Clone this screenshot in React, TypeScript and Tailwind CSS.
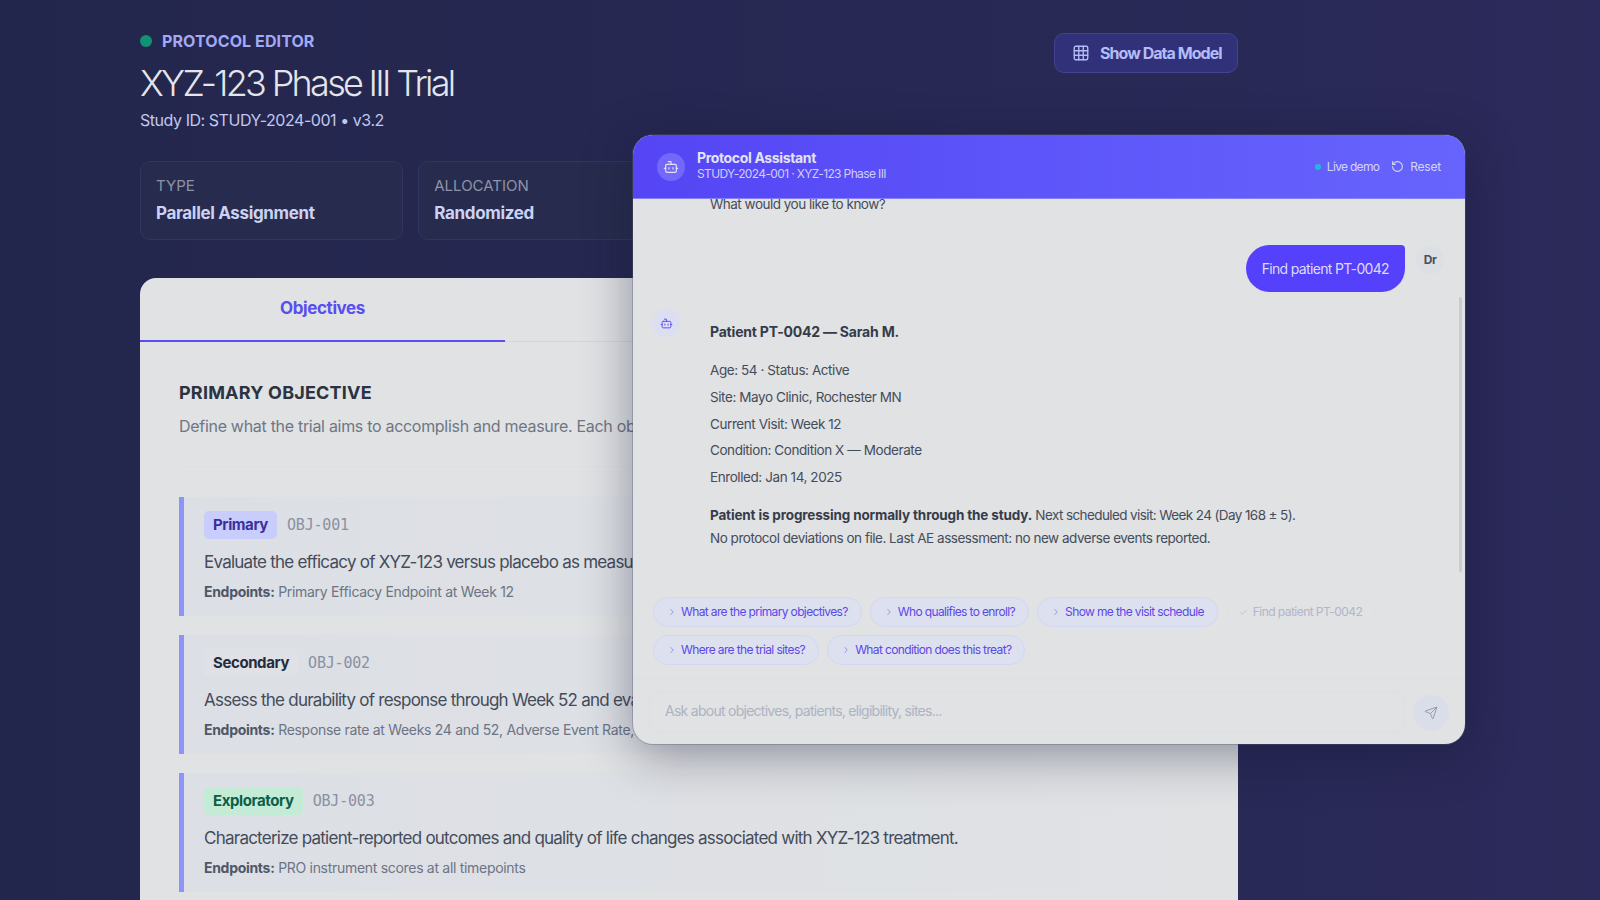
import { Bot, ChevronRight, Check, RotateCcw, Send, Grid3x3 } from "lucide-react";

const metaCards = [
  { label: "TYPE", value: "Parallel Assignment" },
  { label: "ALLOCATION", value: "Randomized" },
  { label: "MASKING", value: "Double-Blind" },
  { label: "ENROLLMENT", value: "1,200" },
];

const objectives = [
  {
    tag: "Primary",
    tagClass: "bg-[#c8cdfb] text-[#3a2fa0]",
    code: "OBJ-001",
    text: "Evaluate the efficacy of XYZ-123 versus placebo as measured by the primary endpoint at Week 12.",
    endpoints: "Primary Efficacy Endpoint at Week 12",
  },
  {
    tag: "Secondary",
    tagClass: "bg-[#dfe1e6] text-[#252c3c]",
    code: "OBJ-002",
    text: "Assess the durability of response through Week 52 and evaluate safety and tolerability.",
    endpoints: "Response rate at Weeks 24 and 52, Adverse Event Rate, Lab Values",
  },
  {
    tag: "Exploratory",
    tagClass: "bg-[#c4ebd6] text-[#0b5f45]",
    code: "OBJ-003",
    text: "Characterize patient-reported outcomes and quality of life changes associated with XYZ-123 treatment.",
    endpoints: "PRO instrument scores at all timepoints",
  },
];

const suggestions = [
  { label: "What are the primary objectives?" },
  { label: "Who qualifies to enroll?" },
  { label: "Show me the visit schedule" },
  { label: "Find patient PT-0042", used: true },
  { label: "Where are the trial sites?" },
  { label: "What condition does this treat?" },
];

const patientRows = [
  "Age: 54 · Status: Active",
  "Site: Mayo Clinic, Rochester MN",
  "Current Visit: Week 12",
  "Condition: Condition X — Moderate",
  "Enrolled: Jan 14, 2025",
];

function ProtocolPage() {
  return (
    <div className="ml-[140px] w-[1098px]">
      <div className="flex items-start justify-between pt-[30px]">
        <div>
          <div className="flex h-[22px] items-center gap-[10px]">
            <span className="h-3 w-3 rounded-full bg-[#0f9373]" />
            <span className="text-[16px] font-bold tracking-[0.1px] text-[#a2aaf5]">PROTOCOL EDITOR</span>
          </div>
          <h1 className="mt-[9px] text-[36px] leading-[44px] font-light tracking-[-2.7px] text-[#e3e5ea]">XYZ-123 Phase III Trial</h1>
          <p className="mt-[3px] text-[16px] leading-[24px] tracking-[-0.45px] text-[#c2c8ee]">Study ID: STUDY-2024-001 • v3.2</p>
        </div>
        <button className="mt-[3px] flex h-[40px] w-[184px] items-center gap-[10px] rounded-[10px] border border-[#434491] bg-[#31317a] pb-[1px] pl-[17px] text-[16px] font-bold tracking-[-0.95px] text-[#b4bcf8]">
          <Grid3x3 size={18} strokeWidth={1.8} />
          Show Data Model
        </button>
      </div>

      <div className="mt-[29px] grid grid-cols-4 gap-[15px]">
        {metaCards.map((c) => (
          <div key={c.label} className="h-[79px] rounded-[10px] border border-[#31365f] bg-[#272c4e] px-[15px] pt-[14px]">
            <div className="text-[15px] leading-[20px] text-[#8d93a8]">{c.label}</div>
            <div className="mt-[6px] text-[17px] leading-[22px] font-bold tracking-[-0.34px] text-[#ccd2f4]">{c.value}</div>
          </div>
        ))}
      </div>

      <div className="mt-[38px] rounded-t-[16px] bg-[#e0e2e4] pb-[40px]">
        <div className="flex h-[64px] border-b border-[#d2d5da]">
          <div className="-mb-px flex w-[365px] items-center justify-center border-b-2 border-[#5b4ef0] text-[17px] font-bold tracking-[-0.4px] text-[#5b4ef0]">
            Objectives
          </div>
        </div>
        <div className="px-[39px] pt-[38px]">
          <h2 className="text-[18px] leading-[26px] font-bold tracking-[0.2px] text-[#2b3242]">PRIMARY OBJECTIVE</h2>
          <p className="mt-[8px] text-[16px] leading-[24px] tracking-[-0.3px] text-[#6f7685]">
            Define what the trial aims to accomplish and measure. Each objective maps to one or more endpoints.
          </p>
          <div className="mt-[28px] border-t border-[#dddfe3]" />
          <div className="mt-[30px] flex flex-col gap-[19px]">
            {objectives.map((o) => (
              <div key={o.code} className="h-[119px] border-l-[5px] border-[#8e93f7] bg-gradient-to-r from-[#dcdfe5] to-[#e0e2e4] pl-[20px] pt-[14px]">
                <div className="flex items-center gap-[10px]">
                  <span className={`rounded-[5px] px-[9px] py-[4px] text-[15px] leading-[20px] font-bold tracking-[-0.4px] ${o.tagClass}`}>{o.tag}</span>
                  <span className="pt-[1px] font-['DejaVu_Sans_Mono',monospace] text-[15px] tracking-[-0.2px] text-[#8a91a3]">{o.code}</span>
                </div>
                <p className="mt-[10px] text-[17px] leading-[26px] tracking-[-0.76px] text-[#444b5a]">{o.text}</p>
                <p className="mt-[7px] text-[14px] leading-[20px] tracking-[-0.3px] text-[#6c7485]">
                  <span className="font-bold text-[#4f5768]">Endpoints:</span> {o.endpoints}
                </p>
              </div>
            ))}
          </div>
        </div>
      </div>
    </div>
  );
}

function ChatPanel() {
  return (
    <div className="absolute left-[633px] top-[135px] flex h-[609px] w-[832px] flex-col overflow-hidden rounded-[20px] bg-[#e0e2e3] shadow-[0_0_0_1px_rgba(90,92,110,0.35),0_10px_50px_rgba(20,22,50,0.42)]">
      <header className="flex h-[64px] shrink-0 items-center border-b border-[#8580f8] bg-gradient-to-r from-[#5545f5] to-[#6764fd] px-[24px]">
        <div className="flex h-7 w-7 items-center justify-center rounded-full bg-[#7468fb] text-[#e3e2f6]">
          <Bot size={16} strokeWidth={1.8} />
        </div>
        <div className="ml-[12px] pb-[2px]">
          <div className="text-[14px] leading-[17px] font-bold tracking-[-0.35px] text-[#e3e3f3]">Protocol Assistant</div>
          <div className="text-[12px] leading-[16px] tracking-[-0.63px] text-[#cfcff2]">STUDY-2024-001 · XYZ-123 Phase III</div>
        </div>
        <div className="ml-auto flex items-center gap-[6px] text-[12px] tracking-[-0.7px] text-[#d4d5f6]">
          <span className="h-[6px] w-[6px] rounded-full bg-[#22b8d8]" />
          Live demo
          <RotateCcw size={13} className="ml-[6px]" />
          <span className="tracking-[-0.2px]">Reset</span>
        </div>
      </header>

      <div className="relative min-h-0 flex-1 overflow-hidden">
        <div className="ml-[62px] -mt-[20px] w-[630px] rounded-[14px] border border-[#dfe1e3] px-[14px] pb-[9px] pt-[14px]">
          <p className="text-[13.5px] leading-[20px] tracking-[-0.5px] text-[#454c5b]">What would you like to know?</p>
        </div>

        <div className="mt-[21px] flex justify-end pr-[21px]">
          <div className="flex h-[47px] items-center rounded-[24px] rounded-tr-[4px] bg-[#5540fb] px-[16px] pb-[1px] text-[14px] tracking-[-0.66px] text-[#dcdcf6]">
            Find patient PT-0042
          </div>
          <div className="ml-[11px] mt-[1px] flex h-7 w-7 items-center justify-center rounded-full bg-[#dcdfe3] text-[12px] font-bold tracking-[-0.5px] text-[#49505e]">Dr</div>
        </div>

        <div className="mt-[17px] flex pl-[19px]">
          <div className="flex h-7 w-7 items-center justify-center rounded-full bg-[#dcdef2] text-[#5b4ef0]">
            <Bot size={13} strokeWidth={1.8} />
          </div>
          <div className="ml-[15px] h-[250px] w-[630px] rounded-[14px] border border-[#dfe1e3] px-[14px] pt-[12px]">
            <p className="text-[14px] leading-[20px] font-bold tracking-[-0.2px] text-[#353b4a]">Patient PT-0042 — Sarah M.</p>
            <div className="mt-[15px]">
              {patientRows.map((r) => (
                <p key={r} className="text-[13.5px] leading-[26.8px] tracking-[-0.42px] text-[#454c5b]">{r}</p>
              ))}
            </div>
            <p className="mt-[13px] text-[13.5px] leading-[23.5px] tracking-[-0.48px] text-[#454c5b]">
              <span className="font-bold tracking-[-0.15px] text-[#353b4a]">Patient is progressing normally through the study.</span>{" "}
              <span className="tracking-[-0.6px]">Next scheduled visit: Week 24 (Day 168 ± 5).</span>
              <br />
              No protocol deviations on file. Last AE assessment: no new adverse events reported.
            </p>
          </div>
        </div>
        <div className="absolute right-[3px] top-[98px] h-[275px] w-[3px] rounded-full bg-[#c9ccd0]" />
      </div>

      <div className="flex flex-wrap gap-[8px] px-[20px] pb-[13px]">
        {suggestions.map((s) =>
          s.used ? (
            <span key={s.label} className="flex h-[30px] items-center gap-[5px] rounded-full border border-[#dee0e2] px-[12px] text-[12px] tracking-[-0.55px] text-[#b1b5cd]">
              <Check size={9} className="text-[#b9bcc7]" />
              {s.label}
            </span>
          ) : (
            <span key={s.label} className="flex h-[30px] items-center gap-[4px] rounded-full border border-[#d3d7f3] bg-[#dde0ef] px-[13px] text-[12px] tracking-[-0.63px] text-[#5b48e6]">
              <ChevronRight size={10} className="text-[#8c84e8]" />
              {s.label}
            </span>
          )
        )}
      </div>

      <div className="flex h-[66px] shrink-0 items-center gap-[8px] border-t border-[#dcdee0] px-[16px]">
        <div className="flex h-[42px] flex-1 items-center rounded-[10px] border border-[#dcdee0] px-[15px] pb-[2px] text-[14px] tracking-[-0.73px] text-[#adb3c2]">
          Ask about objectives, patients, eligibility, sites...
        </div>
        <div className="mt-[2px] flex h-9 w-9 items-center justify-center rounded-full bg-[#dadee9] text-[#8b93a8]">
          <Send size={14} strokeWidth={1.5} />
        </div>
      </div>
    </div>
  );
}

export default function App() {
  return (
    <div className="relative h-[900px] w-[1600px] overflow-hidden bg-gradient-to-r from-[#23264c] to-[#2b2a5a] font-['Inter',sans-serif]">
      <ProtocolPage />
      <ChatPanel />
    </div>
  );
}
